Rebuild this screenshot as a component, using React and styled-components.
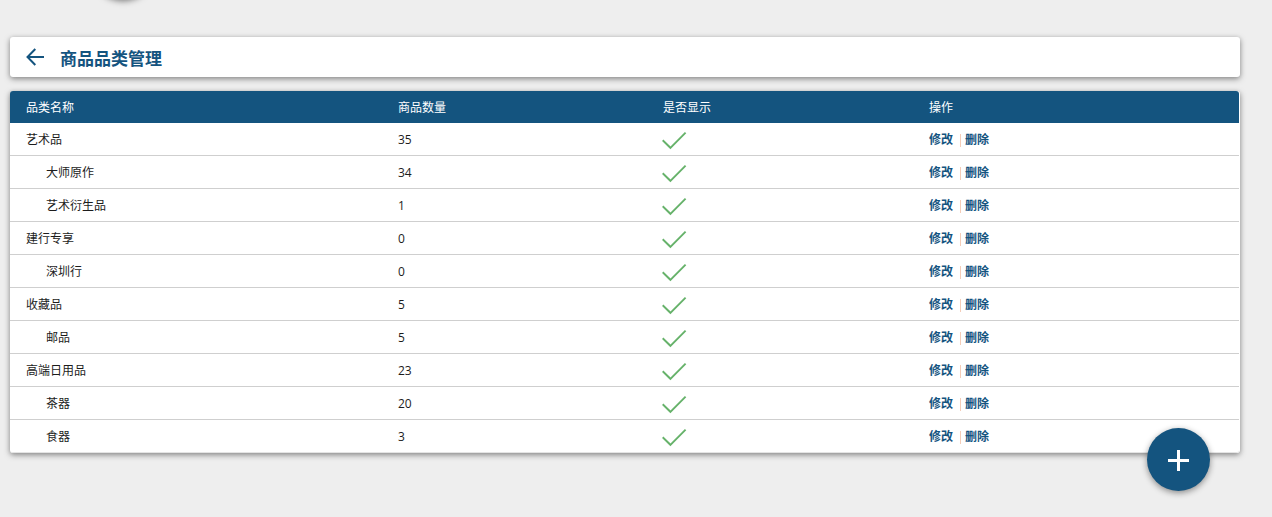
import React from "react";
import styled, { createGlobalStyle } from "styled-components";

const Global = createGlobalStyle`
  * { box-sizing: border-box; }
  html, body { margin: 0; height: 100%; overflow: hidden; background: #eee; }
  body {
    font-family: "Open Sans", "Noto Sans CJK SC", sans-serif;
    font-size: 12px;
    color: #1c1c1c;
  }
`;

const blue = "#14547f";
const shadow = "0 2px 6px 0 rgba(0, 0, 0, 0.36), 0 1px 4px 0 rgba(0, 0, 0, 0.14)";

const Page = styled.main`
  position: relative;
  height: 517px;
  padding: 37px 32px 0 10px;
  display: flex;
  flex-direction: column;
  gap: 14px;
`;

const Avatar = styled.div`
  position: absolute;
  left: 91px;
  top: -65px;
  width: 64px;
  height: 64px;
  border-radius: 50%;
  box-shadow: 0 2px 6px 0 rgba(0, 0, 0, 0.5);
`;

const TitleBar = styled.header`
  height: 40px;
  padding-left: 16px;
  display: flex;
  align-items: center;
  gap: 15px;
  background: #fff;
  border-radius: 3px;
  box-shadow: ${shadow};
  color: ${blue};
`;

const Title = styled.h1`
  margin: 0;
  padding-top: 3px;
  font-size: 17px;
  line-height: 37px;
  font-weight: 700;
`;

const Table = styled.section`
  background: #fff;
  border-radius: 3px;
  box-shadow: ${shadow};
  padding-right: 1px;
`;

const Row = styled.div`
  display: grid;
  grid-template-columns: 372px 265px 266px 1fr;
  height: 33px;
  padding-left: 16px;
  border-bottom: 1px solid #cfcfcf;
  &:last-child { border-bottom-color: #e4e4e4; border-radius: 0 0 3px 3px; }
`;

const HeadRow = styled(Row)`
  height: 32px;
  border-bottom: 0;
  border-radius: 3px 3px 0 0;
  background: ${blue};
  color: #fff;
`;

const Cell = styled.div`
  display: flex;
  align-items: center;
  line-height: 30px;
  padding-top: 2px;
  padding-left: ${(p) => (p.$child ? 20 : 0)}px;
`;

const Action = styled.a`
  color: ${blue};
  font-weight: 700;
  cursor: pointer;
`;

const Divider = styled.span`
  width: 1px;
  height: 13px;
  margin: 0 4px 0 7px;
  background: #f5cdb8;
`;

const AddButton = styled.button`
  position: absolute;
  left: 1147px;
  top: 428px;
  width: 63px;
  height: 63px;
  padding: 2px 0 0;
  border: 0;
  border-radius: 50%;
  background: ${blue};
  box-shadow: 0 2px 6px 0 rgba(0, 0, 0, 0.42);
  display: grid;
  place-items: center;
`;

const CheckSvg = styled.svg`
  display: block;
  margin-left: -2px;
`;

const Check = () => (
  <CheckSvg width="26" height="20" viewBox="0 0 26 20" fill="none">
    <path d="M1.7 10.3L9.4 17.8L24.6 2.7" stroke="#66b26a" strokeWidth="1.9" />
  </CheckSvg>
);

const rows = [
  ["艺术品", 35, false],
  ["大师原作", 34, true],
  ["艺术衍生品", 1, true],
  ["建行专享", 0, false],
  ["深圳行", 0, true],
  ["收藏品", 5, false],
  ["邮品", 5, true],
  ["高端日用品", 23, false],
  ["茶器", 20, true],
  ["食器", 3, true],
];

export default function App() {
  return (
    <>
      <Global />
      <Page>
        <Avatar />
        <TitleBar>
          <svg width="19" height="18" viewBox="0 0 19 18" fill="none" stroke="currentColor" strokeWidth="2">
            <path d="M18 9H2M9.3 1L1.5 9L9.3 17" />
          </svg>
          <Title>商品品类管理</Title>
        </TitleBar>
        <Table>
          <HeadRow>
            <Cell>品类名称</Cell>
            <Cell>商品数量</Cell>
            <Cell>是否显示</Cell>
            <Cell>操作</Cell>
          </HeadRow>
          {rows.map(([name, count, child]) => (
            <Row key={name}>
              <Cell $child={child}>{name}</Cell>
              <Cell>{count}</Cell>
              <Cell><Check /></Cell>
              <Cell>
                <Action>修改</Action>
                <Divider />
                <Action>删除</Action>
              </Cell>
            </Row>
          ))}
        </Table>
        <AddButton aria-label="新增">
          <svg width="21" height="21" viewBox="0 0 21 21" stroke="#fff" strokeWidth="3">
            <path d="M10.5 0V21M0 10.5H21" />
          </svg>
        </AddButton>
      </Page>
    </>
  );
}
